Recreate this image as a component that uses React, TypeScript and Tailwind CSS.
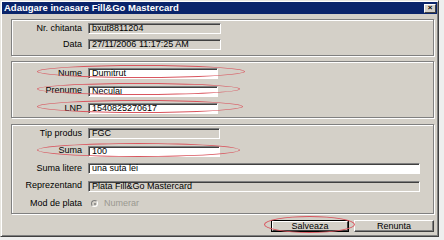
export default function App() {
  const sunken =
    'border border-t-[#808080] border-l-[#808080] border-b-white border-r-white shadow-[inset_1px_1px_0_#404040]';
  const etched = 'border border-[#808080] shadow-[inset_1px_1px_0_#fff,1px_1px_0_#fff]';

  const Row = ({ label, value, width, editable }: { label: string; value: string; width: string; editable?: boolean }) => (
    <div className="flex items-center h-[11px]">
      <span className="w-[70px] text-right shrink-0">{label}</span>
      <div
        className={`ml-[6px] h-[11px] ${width} ${sunken} ${editable ? 'bg-white' : 'bg-[#d4d0c8]'} pl-[3px] flex items-center leading-none`}
      >
        {value}
      </div>
    </div>
  );

  const ellipse = 'absolute border-[1.5px] border-[#d9565f] rounded-[50%] pointer-events-none';

  return (
    <div className="relative w-[444px] h-[240px] bg-[#eeeeee] overflow-hidden font-['Liberation_Sans',Arial,sans-serif] text-[9px] text-black">
      {/* Window */}
      <div className="w-[439px] h-[237px] bg-[#d4d0c8] border border-t-[#e8e6e0] border-l-[#e8e6e0] border-r-[#404040] border-b-[#404040] shadow-[inset_1px_1px_0_#fff,inset_-1px_-1px_0_#808080] p-[1px] flex flex-col">
        {/* Title bar */}
        <div className="h-[12px] bg-[#0a246a] flex items-center justify-between pl-[2px] pr-[1px]">
          <span className="text-white font-bold text-[9.5px] leading-none">Adaugare incasare Fill&amp;Go Mastercard</span>
          <div className="w-[12px] h-[9px] bg-[#d4d0c8] border border-t-white border-l-white border-r-[#404040] border-b-[#404040] flex items-center justify-center text-[8px] font-bold leading-none">
            ×
          </div>
        </div>

        {/* Client */}
        <div className="flex flex-col pl-[9px] pr-[3px] pt-[5px]">
          {/* Group 1 */}
          <div className={`h-[37px] ${etched} flex flex-col gap-[5px] pt-[3px]`}>
            <Row label="Nr. chitanta" value="bxut8811204" width="w-[133px]" />
            <Row label="Data" value="27/11/2006 11:17:25 AM" width="w-[133px]" />
          </div>

          {/* Group 2 */}
          <div className={`mt-[5px] h-[57px] ${etched} flex flex-col gap-[6.5px] pt-[6px]`}>
            <Row label="Nume" value="Dumitrut" width="w-[130px]" editable />
            <Row label="Prenume" value="Neculai" width="w-[130px]" editable />
            <Row label="LNP" value="1540825270617" width="w-[130px]" editable />
          </div>

          {/* Group 3 */}
          <div className={`mt-[6px] h-[90px] ${etched} flex flex-col gap-[6.5px] pt-[3px]`}>
            <Row label="Tip produs" value="FGC" width="w-[132px]" />
            <Row label="Suma" value="100" width="w-[132px]" editable />
            <Row label="Suma litere" value="una suta lei" width="w-[332px]" editable />
            <Row label="Reprezentand" value="Plata Fill&Go Mastercard" width="w-[332px]" />
            <div className="flex items-center h-[11px]">
              <span className="w-[70px] text-right shrink-0">Mod de plata</span>
              <div className="ml-[9px] w-[7px] h-[7px] rounded-full bg-[#d4d0c8] border border-t-[#808080] border-l-[#808080] border-b-white border-r-white flex items-center justify-center">
                <div className="w-[2px] h-[2px] rounded-full bg-[#808080]" />
              </div>
              <span className="ml-[6px] text-[#9a9890]">Numerar</span>
            </div>
          </div>

          {/* Buttons */}
          <div className="mt-[6px] flex justify-end gap-[5px]">
            <div className="w-[78px] h-[12px] border border-black flex">
              <div className="flex-1 bg-[#d4d0c8] border border-t-white border-l-white border-r-[#404040] border-b-[#404040] flex items-center justify-center leading-none">
                Salveaza
              </div>
            </div>
            <div className="w-[80px] h-[12px] bg-[#d4d0c8] border border-t-white border-l-white border-r-[#404040] border-b-[#404040] shadow-[inset_-1px_-1px_0_#808080] flex items-center justify-center leading-none">
              Renunta
            </div>
          </div>
        </div>
      </div>

      {/* Red annotation ellipses */}
      <div className={`${ellipse} left-[37px] top-[65px] w-[208px] h-[13px]`} />
      <div className={`${ellipse} left-[37px] top-[83px] w-[203px] h-[12px]`} />
      <div className={`${ellipse} left-[37px] top-[100px] w-[206px] h-[13px]`} />
      <div className={`${ellipse} left-[37px] top-[143px] w-[203px] h-[14px]`} />
      <div className={`${ellipse} left-[264px] top-[216px] w-[91px] h-[17px]`} />
    </div>
  );
}
